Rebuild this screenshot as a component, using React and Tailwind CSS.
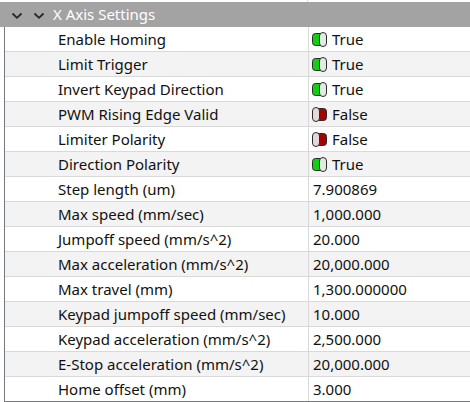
import React from "react";

const rows = [
  { label: "Enable Homing", bool: true },
  { label: "Limit Trigger", bool: true },
  { label: "Invert Keypad Direction", bool: true },
  { label: "PWM Rising Edge Valid", bool: false },
  { label: "Limiter Polarity", bool: false },
  { label: "Direction Polarity", bool: true },
  { label: "Step length (um)", value: "7.900869" },
  { label: "Max speed (mm/sec)", value: "1,000.000" },
  { label: "Jumpoff speed (mm/s^2)", value: "20.000" },
  { label: "Max acceleration (mm/s^2)", value: "20,000.000" },
  { label: "Max travel (mm)", value: "1,300.000000" },
  { label: "Keypad jumpoff speed (mm/sec)", value: "10.000" },
  { label: "Keypad acceleration (mm/s^2)", value: "2,500.000" },
  { label: "E-Stop acceleration (mm/s^2)", value: "20,000.000" },
  { label: "Home offset (mm)", value: "3.000" },
];

const Chevron = () => (
  <svg width="12" height="8" viewBox="0 0 12 8" className="shrink-0">
    <path d="M1.5 1.5 L6 5.8 L10.5 1.5" fill="none" stroke="#262626" strokeWidth="1.8" />
  </svg>
);

const Toggle = ({ on }) =>
  on ? (
    <svg width="15" height="15" viewBox="0 0 15 15" className="shrink-0">
      <rect x="0.5" y="1.5" width="11" height="12" rx="3" fill="#11d011" stroke="#2a2a2a" />
      <rect x="7.5" y="0.5" width="7" height="14" rx="3.5" fill="#e2ebe2" stroke="#2a2a2a" />
    </svg>
  ) : (
    <svg width="15" height="15" viewBox="0 0 15 15" className="shrink-0">
      <rect x="3.5" y="1.5" width="11" height="12" rx="3" fill="#a00606" stroke="#2a2a2a" />
      <rect x="0.5" y="0.5" width="7" height="14" rx="3.5" fill="#e6d8d8" stroke="#2a2a2a" />
    </svg>
  );

export default function App() {
  return (
    <div
      className="w-[470px] h-[402px] bg-white overflow-hidden text-[15px] text-[#111]"
      style={{ fontFamily: '"Noto Sans", "Open Sans", sans-serif' }}
    >
      <div className="h-[2px] flex">
        <div className="w-[308px] border-r border-[#dadada]" />
      </div>

      {/* Group header */}
      <div className="h-[25px] bg-[#a3a3a3] flex items-center">
        <div className="w-[53px] shrink-0 flex items-center gap-[10px] pl-[11px] pt-[2px]">
          <Chevron />
          <Chevron />
        </div>
        <span className="text-white text-[15px] leading-none">X Axis Settings</span>
      </div>

      {/* Property rows */}
      <div className="ml-[4px] border-l border-b border-[#737884]">
        {rows.map((row, idx) => (
          <div
            key={row.label}
            className={`flex h-[25px] border-b border-[#d9d9d9] last:border-b-0 last:h-[24px] ${
              idx % 2 === 1 ? "bg-[#f3f3f3]" : "bg-white"
            }`}
          >
            <div className="w-[304px] shrink-0 border-r border-[#d9d9d9] pl-[53px] flex items-center whitespace-nowrap">
              {row.label}
            </div>
            <div className="flex items-center pl-[3px] gap-[5px] whitespace-nowrap">
              {row.value !== undefined ? (
                <span className="pl-[1px]">{row.value}</span>
              ) : (
                <>
                  <Toggle on={row.bool} />
                  <span>{row.bool ? "True" : "False"}</span>
                </>
              )}
            </div>
          </div>
        ))}
      </div>
    </div>
  );
}
